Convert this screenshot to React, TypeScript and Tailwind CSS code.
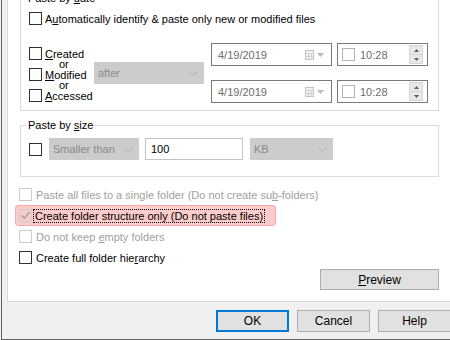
import type { ReactNode } from 'react';

// Win32-style "paste options" dialog page

function Key({ children }: { children: ReactNode }) {
  return <span className="underline underline-offset-[1px]">{children}</span>;
}

function Check({
  disabled = false,
  checked = false,
  clear = false,
}: {
  disabled?: boolean;
  checked?: boolean;
  clear?: boolean;
}) {
  return (
    <span
      className={`flex h-[13px] w-[13px] shrink-0 items-center justify-center border ${
        disabled ? 'border-[#cccccc]' : 'border-[#333333]'
      } ${clear ? 'bg-transparent' : 'bg-white'}`}
    >
      {checked && (
        <svg width="11" height="11" viewBox="0 0 11 11">
          <path d="M1.5 5.5l2.8 2.8 5.2-6.3" fill="none" stroke="#9a9a9a" strokeWidth="1.2" />
        </svg>
      )}
    </span>
  );
}

function Combo({ label, className }: { label: string; className: string }) {
  return (
    <div
      className={`flex h-[22px] shrink-0 items-center justify-between border border-[#cccccc] bg-[#cccccc] pl-[3px] pr-[5px] text-[#8a8a8a] ${className}`}
    >
      <span>{label}</span>
      <svg width="9" height="5" viewBox="0 0 9 5">
        <path d="M0.5 0.5l4 4 4-4" fill="none" stroke="#b0b0b0" />
      </svg>
    </div>
  );
}

function DateBox() {
  return (
    <div className="flex h-[23px] w-[121px] shrink-0 items-center border border-[#7a7a7a] bg-white pl-[6px] pr-[7px] text-[#6d6d6d]">
      <span className="flex-1">4/19/2019</span>
      <svg width="9" height="10" viewBox="0 0 9 10">
        <rect x="0.5" y="0.5" width="8" height="9" fill="#f2f2f2" stroke="#c2c2c2" />
        <path d="M0 3.5h9M0 6.5h9M3.5 3v7M6.5 3v7" stroke="#d2d2d2" />
      </svg>
      <svg className="ml-[3px]" width="7" height="4" viewBox="0 0 7 4">
        <path d="M0 0h7L3.5 4z" fill="#b8b8b8" />
      </svg>
    </div>
  );
}

function TimeBox() {
  return (
    <div className="flex h-[23px] w-[91px] shrink-0 items-center border border-[#7a7a7a] bg-white pl-[4px] pr-[4px] text-[#6d6d6d]">
      <span className="h-[13px] w-[13px] shrink-0 border border-[#b4b4b4] bg-white" />
      <span className="ml-[5px] flex-1">10:28</span>
      <div className="flex w-[14px] flex-col">
        <span className="flex h-[10px] items-center justify-center border border-[#d6d6d6] bg-[#e8e8e8]">
          <svg width="5" height="3" viewBox="0 0 5 3">
            <path d="M0 3h5L2.5 0z" fill="#606060" />
          </svg>
        </span>
        <span className="flex h-[9px] items-center justify-center border border-t-0 border-[#d6d6d6] bg-[#e8e8e8]">
          <svg width="5" height="3" viewBox="0 0 5 3">
            <path d="M0 0h5L2.5 3z" fill="#606060" />
          </svg>
        </span>
      </div>
    </div>
  );
}

function Group({ label, className, children }: { label: ReactNode; className: string; children: ReactNode }) {
  return (
    <div className={`relative ml-[12px] flex w-[419px] shrink-0 flex-col border border-[#dcdcdc] ${className}`}>
      <span className="absolute left-[5px] top-[-8px] bg-white px-[2px] leading-[14px]">{label}</span>
      {children}
    </div>
  );
}

function CheckRow({ label, disabled = false }: { label: ReactNode; disabled?: boolean }) {
  return (
    <div className="flex h-[21px] items-center">
      <Check disabled={disabled} />
      <span className={`ml-[4px] ${disabled ? 'text-[#a0a0a0]' : 'text-black'}`}>{label}</span>
    </div>
  );
}

function Button({ children, focused = false }: { children: ReactNode; focused?: boolean }) {
  return (
    <button
      className={`flex h-[22px] w-[73px] shrink-0 items-center justify-center bg-[#e1e1e1] text-[12px] ${
        focused ? 'border-2 border-[#0078d7]' : 'border border-[#adadad]'
      }`}
    >
      {children}
    </button>
  );
}

export default function App() {
  return (
    <div className="flex h-[340px] w-[450px] overflow-hidden bg-[#f0f0f0] font-['Liberation_Sans',Arial,sans-serif] text-[11px] leading-[14px] text-black">
      <div className="w-px shrink-0" />
      <div className="flex flex-1 flex-col border-b border-l border-[#646464]">
        <div className="ml-[5px] flex h-[302px] shrink-0 flex-col border-b border-l border-[#d9d9d9] bg-white">
          <Group
            className="-mt-[2px] pb-[7px]"
            label={
              <>
                Paste by <Key>d</Key>ate
              </>
            }
          >
            <div className="ml-[8px] mt-[13px] flex h-[13px] items-center">
              <Check />
              <span className="ml-[3px]">
                A<Key>u</Key>tomatically identify &amp; paste only new or modified files
              </span>
            </div>

            <div className="ml-[8px] mt-[18px] flex items-start">
              <div className="flex w-[65px] shrink-0 flex-col pt-[4px]">
                <div className="flex h-[13px] items-center">
                  <Check />
                  <span className="ml-[3px]">
                    <Key>C</Key>reated
                  </span>
                </div>
                <span className="ml-[30px] h-[8px] leading-[8px]">or</span>
                <div className="flex h-[13px] items-center">
                  <Check />
                  <span className="ml-[3px]">
                    <Key>M</Key>odified
                  </span>
                </div>
                <span className="ml-[30px] h-[8px] leading-[8px]">or</span>
                <div className="flex h-[13px] items-center">
                  <Check />
                  <span className="ml-[3px]">
                    <Key>A</Key>ccessed
                  </span>
                </div>
              </div>

              <Combo label="after" className="mt-[19px] w-[110px]" />

              <div className="ml-[7px] flex flex-col gap-[14px]">
                <div className="flex gap-[5px]">
                  <DateBox />
                  <TimeBox />
                </div>
                <div className="flex gap-[5px]">
                  <DateBox />
                  <TimeBox />
                </div>
              </div>
            </div>
          </Group>

          <Group
            className="mt-[14px] pb-[16px]"
            label={
              <>
                Paste by <Key>s</Key>ize
              </>
            }
          >
            <div className="ml-[8px] mt-[12px] flex h-[22px] items-center">
              <Check />
              <Combo label="Smaller than" className="ml-[7px] w-[90px]" />
              <div className="ml-[6px] flex h-[22px] w-[98px] shrink-0 items-center border border-[#c4c4c4] bg-white pl-[5px]">
                100
              </div>
              <Combo label="KB" className="ml-[7px] w-[83px]" />
            </div>
          </Group>

          <div className="ml-[11px] mt-[7px] flex flex-col">
            <CheckRow
              disabled
              label={
                <>
                  Paste all files to a single folder (Do not create su<Key>b</Key>-folders)
                </>
              }
            />
            <div className="-ml-[4px] flex h-[21px] w-[261px] items-center rounded-[3px] border border-[#f6aaaa] bg-[#fccccc] pl-[3px]">
              <Check disabled checked clear />
              <span className="ml-px border border-dotted border-black px-px leading-[12px]">
                Create folder structure only (Do not paste files)
              </span>
            </div>
            <CheckRow
              disabled
              label={
                <>
                  Do not keep <Key>e</Key>mpty folders
                </>
              }
            />
            <CheckRow
              label={
                <>
                  Create full folder hie<Key>r</Key>archy
                </>
              }
            />
          </div>

          <div className="ml-[12px] mt-px flex w-[419px] justify-end">
            <button className="flex h-[21px] w-[119px] items-center justify-center border border-[#adadad] bg-[#e1e1e1] text-[12px]">
              <Key>P</Key>review
            </button>
          </div>
        </div>

        <div className="ml-[214px] mt-[8px] flex gap-[8px]">
          <Button focused>OK</Button>
          <Button>Cancel</Button>
          <Button>Help</Button>
        </div>
      </div>
    </div>
  );
}
